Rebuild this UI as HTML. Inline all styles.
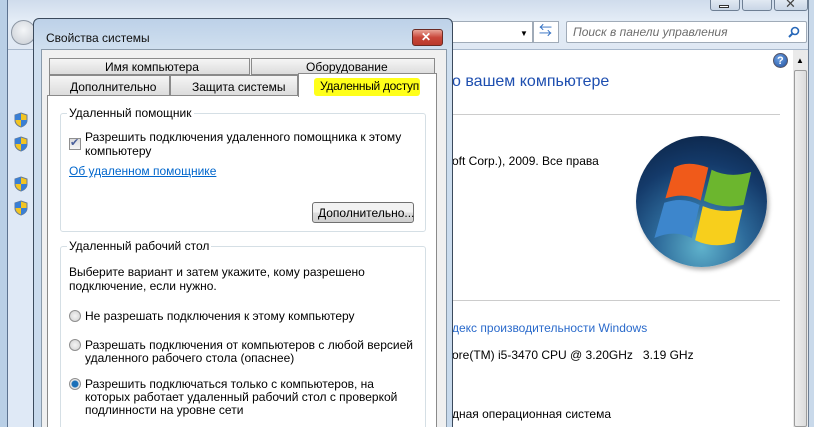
<!DOCTYPE html>
<html><head><meta charset="utf-8"><style>
*{margin:0;padding:0;box-sizing:border-box}
html,body{width:814px;height:427px;overflow:hidden}
body{position:relative;background:#fff;font-family:"Liberation Sans","Noto Sans CJK JP",sans-serif;font-size:12px;color:#000}
.a{position:absolute}
.t{position:absolute;white-space:nowrap;line-height:14px}
</style></head><body>
<div class="a" style="left:0;top:0;width:814px;height:50px;background:linear-gradient(#cfdcec,#e3ecf6 40%,#dfe8f3)"></div>
<div class="a" style="left:0;top:49px;width:814px;height:1px;background:#a8b8cc"></div>
<div class="a" style="left:0;top:0;width:7px;height:427px;background:#b9cfe6"></div>
<div class="a" style="left:7px;top:0;width:1px;height:427px;background:#5d7390"></div>
<div class="a" style="left:8px;top:50px;width:26px;height:377px;background:#dfe9f6"></div>
<div class="a" style="left:11px;top:20px;width:25px;height:25px;border-radius:50%;background:radial-gradient(circle at 50% 40%,#f4f6f8,#c7ccd3);border:1px solid #8c96a3"></div>
<svg class="a" style="left:14px;top:112px" width="14" height="110" viewBox="0 0 14 110">
<g id="s"><path d="M7 1 L13 3 L13 8 Q13 13 7 15 Q1 13 1 8 L1 3Z" fill="#f3c521" stroke="#6b7c90"/><path d="M7 1 L7 8 L1 8 L1 3Z" fill="#3a7fd4"/><path d="M7 8 L13 8 Q13 13 7 15Z" fill="#3a7fd4"/></g>
<use href="#s" y="24"/><use href="#s" y="64"/><use href="#s" y="88"/>
</svg>
<div class="a" style="left:710px;top:-4px;width:30px;height:15px;border:1px solid #6e7f94;border-radius:3px;background:linear-gradient(#e8eef6,#c9d6e6)"></div>
<div class="a" style="left:742px;top:-4px;width:30px;height:15px;border:1px solid #6e7f94;border-radius:3px;background:linear-gradient(#e8eef6,#c9d6e6)"></div>
<div class="a" style="left:774px;top:-4px;width:34px;height:15px;border:1px solid #6e7f94;border-radius:3px;background:linear-gradient(#e8eef6,#c9d6e6)"></div>
<div class="a" style="left:719px;top:5px;width:10px;height:3px;border:1px solid #333;background:#fff"></div>
<div class="t" style="left:785px;top:-3px;color:#444;font-size:13px">✕</div>
<div class="a" style="left:808px;top:0;width:6px;height:427px;background:#c9d9ea;border-left:1px solid #6e7f94"></div>
<div class="a" style="left:440px;top:21px;width:93px;height:22px;background:#fff;border:1px solid #a0abb8"></div>
<div class="t" style="left:445px;top:25px;color:#333">а</div>
<div class="t" style="left:520px;top:27px;font-size:8px">▼</div>
<div class="a" style="left:533px;top:21px;width:26px;height:22px;background:#fff;border:1px solid #a0abb8"></div>
<div class="t" style="left:539px;top:24px;color:#2a6ac0;font-size:13px">⇆</div>
<div class="a" style="left:566px;top:21px;width:241px;height:22px;background:#fff;border:1px solid #a0abb8;border-radius:2px"></div>
<div class="t" style="left:573px;top:25px;color:#6d6d6d;font-style:italic">Поиск в панели управления</div>
<svg class="a" style="left:788px;top:26px" width="12" height="12"><circle cx="7" cy="5" r="3.5" fill="none" stroke="#2767b8" stroke-width="1.6"/><line x1="4.5" y1="7.5" x2="1" y2="11" stroke="#2767b8" stroke-width="2"/></svg>
<div class="a" style="left:793px;top:50px;width:15px;height:377px;background:#eaeaea"></div>
<div class="a" style="left:794px;top:70px;width:13px;height:357px;background:linear-gradient(90deg,#eee,#dcdcdc);border:1px solid #9c9c9c;border-radius:2px"></div>
<div class="t" style="left:796px;top:54px;font-size:8px">▲</div>
<div class="a" style="left:773px;top:53px;width:15px;height:15px;border-radius:50%;background:radial-gradient(circle at 40% 35%,#6fa3e6,#1f4f9c);border:1px solid #556"></div>
<div class="t" style="left:777px;top:54px;color:#fff;font-weight:bold;font-size:11px">?</div>
<div class="t" style="left:452px;top:73px;color:#1e4fb0;font-size:16px;line-height:18px">о вашем компьютере</div>
<div class="a" style="left:452px;top:114px;width:328px;height:1px;background:#ccc"></div>
<div class="t" style="left:452px;top:154px">oft Corp.), 2009. Все права</div>
<div class="a" style="left:452px;top:300px;width:328px;height:1px;background:#ccc"></div>
<div class="t" style="left:452px;top:321px;color:#2a6acb">декс производительности Windows</div>
<div class="t" style="left:452px;top:348px">ore(TM) i5-3470 CPU @ 3.20GHz &nbsp; 3.19 GHz</div>
<div class="t" style="left:452px;top:407px">дная операционная система</div>
<div class="a" style="left:636px;top:136px;width:131px;height:131px;border-radius:50%;background:radial-gradient(circle at 50% 85%,#5fb2cc 0%,#2d6a9a 35%,#143a6a 65%,#0a1f3e 100%);box-shadow:2px 3px 4px rgba(0,0,0,.3)"></div>
<svg class="a" style="left:650px;top:160px" width="110" height="90" viewBox="0 0 100 80">
<path d="M22 6 Q34 -1 53 6 L46 36 Q32 28 14 34Z" fill="#f05a1a"/>
<path d="M56 8 Q72 16 92 10 L85 40 Q66 44 49 36Z" fill="#6cb62e"/>
<path d="M13 38 Q30 32 45 40 L38 70 Q22 62 4 70Z" fill="#3d86cc"/>
<path d="M48 41 Q65 48 84 44 L77 74 Q58 80 41 72Z" fill="#f7cf1c"/>
</svg>
<div class="a" style="left:33px;top:18px;width:420px;height:412px;border:1px solid #3b4a5c;border-radius:6px 6px 0 0;background:linear-gradient(#bdd1e8,#cfdfef 30px,#c7d9ec)"></div>
<div class="t" style="left:46px;top:31px;font-size:12px;color:#111">Свойства системы</div>
<div class="a" style="left:412px;top:29px;width:31px;height:17px;border:1px solid #6b2b24;border-radius:3px;background:linear-gradient(#e9a497,#c9473a 50%,#b83a2c)"></div>
<div class="t" style="left:421px;top:30px;color:#fff;font-weight:bold;font-size:12px">✕</div>
<div class="a" style="left:41px;top:49px;width:406px;height:380px;background:#f0f0f0;border:1px solid #8a9aaa"></div>
<div class="a" style="left:49px;top:58px;width:201px;height:17px;border:1px solid #8a8a8a;background:linear-gradient(#f5f5f5,#dcdcdc)"></div>
<div class="t" style="left:105px;top:60px">Имя компьютера</div>
<div class="a" style="left:251px;top:58px;width:184px;height:17px;border:1px solid #8a8a8a;background:linear-gradient(#f5f5f5,#dcdcdc)"></div>
<div class="t" style="left:306px;top:60px">Оборудование</div>
<div class="a" style="left:49px;top:75px;width:121px;height:21px;border:1px solid #8a8a8a;background:linear-gradient(#f5f5f5,#dcdcdc)"></div>
<div class="t" style="left:70px;top:80px">Дополнительно</div>
<div class="a" style="left:170px;top:75px;width:128px;height:21px;border:1px solid #8a8a8a;background:linear-gradient(#f5f5f5,#dcdcdc)"></div>
<div class="t" style="left:192px;top:80px">Защита системы</div>
<div class="a" style="left:47px;top:95px;width:390px;height:340px;background:#fff;border:1px solid #8a8a8a"></div>
<div class="a" style="left:298px;top:73px;width:139px;height:24px;background:#fff;border:1px solid #8a8a8a;border-bottom:none"></div>
<div class="a" style="left:314px;top:78px;width:106px;height:18px;background:#ffff1a;border-radius:3px"></div>
<div class="t" style="left:320px;top:79px;letter-spacing:-0.3px">Удаленный доступ</div>
<div class="a" style="left:60px;top:113px;width:366px;height:119px;border:1px solid #d5dfe5;border-radius:3px"></div>
<div class="t" style="left:67px;top:106px;background:#fff;padding:0 2px">Удаленный помощник</div>
<div class="a" style="left:69px;top:138px;width:12px;height:12px;border:1px solid #8f8f8f;background:linear-gradient(#dcdcdc,#f6f6f6)"></div>
<div class="t" style="left:70px;top:136px;color:#4a5f9a;font-size:11px">✔</div>
<div class="t" style="left:85px;top:130px">Разрешить подключения удаленного помощника к этому</div>
<div class="t" style="left:85px;top:144px">компьютеру</div>
<div class="t" style="left:69px;top:164px;color:#0066cc;text-decoration:underline">Об удаленном помощнике</div>
<div class="a" style="left:312px;top:202px;width:102px;height:21px;border:1px solid #707070;border-radius:3px;background:linear-gradient(#f2f2f2 50%,#dddddd 50%,#cfcfcf)"></div>
<div class="t" style="left:318px;top:206px">Дополнительно...</div>
<div class="a" style="left:60px;top:246px;width:366px;height:200px;border:1px solid #d5dfe5;border-radius:3px"></div>
<div class="t" style="left:67px;top:239px;background:#fff;padding:0 2px">Удаленный рабочий стол</div>
<div class="t" style="left:69px;top:265px">Выберите вариант и затем укажите, кому разрешено</div>
<div class="t" style="left:69px;top:279px">подключение, если нужно.</div>
<div class="a" style="left:69px;top:310px;width:12px;height:12px;border-radius:50%;border:1px solid #8f8f8f;background:radial-gradient(#f4f4f4,#d0d0d0)"></div>
<div class="t" style="left:85px;top:309px">Не разрешать подключения к этому компьютеру</div>
<div class="a" style="left:69px;top:339px;width:12px;height:12px;border-radius:50%;border:1px solid #8f8f8f;background:radial-gradient(#f4f4f4,#d0d0d0)"></div>
<div class="t" style="left:85px;top:338px">Разрешать подключения от компьютеров с любой версией</div>
<div class="t" style="left:85px;top:351px">удаленного рабочего стола (опаснее)</div>
<div class="a" style="left:69px;top:378px;width:12px;height:12px;border-radius:50%;border:1px solid #8f8f8f;background:radial-gradient(circle,#1a6fb8 0,#1a6fb8 3px,#e8e8e8 4px)"></div>
<div class="t" style="left:85px;top:377px">Разрешить подключаться только с компьютеров, на</div>
<div class="t" style="left:85px;top:390px">которых работает удаленный рабочий стол с проверкой</div>
<div class="t" style="left:85px;top:403px">подлинности на уровне сети</div>
</body></html>
